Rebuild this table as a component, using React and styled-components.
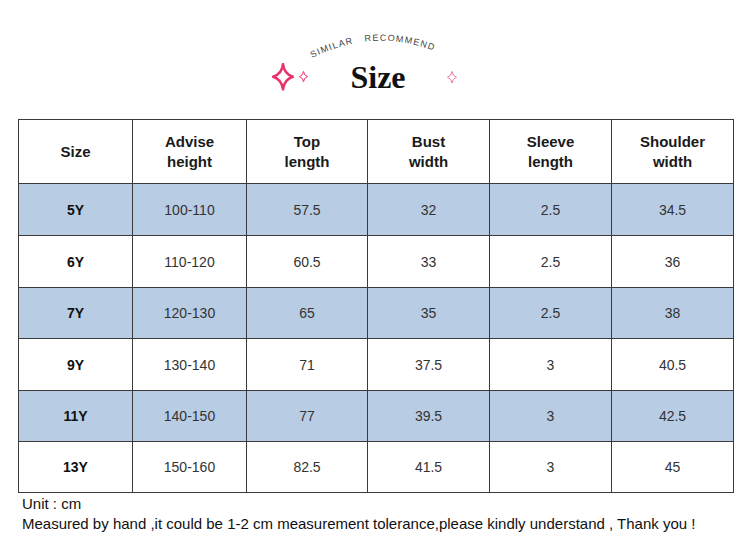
import React from 'react';
import styled, { createGlobalStyle } from 'styled-components';

const GlobalStyle = createGlobalStyle`
  body {
    margin: 0;
    background: #fff;
    font-family: "Liberation Sans", Arial, sans-serif;
  }
`;

const Page = styled.div`
  width: 750px;
  height: 540px;
  overflow: hidden;
`;

const Header = styled.header`
  height: 119px;
  display: flex;
  flex-direction: column;
  align-items: center;
  padding-top: 31px;
  box-sizing: border-box;
`;

const ArcText = styled.svg`
  display: block;
  margin-left: 6px;
`;

const TitleRow = styled.div`
  display: flex;
  align-items: center;
  margin-left: 6px;
`;

const Side = styled.div`
  width: 78px;
  display: flex;
  align-items: center;
  padding-left: ${(p) => p.$pad || 0}px;
  box-sizing: border-box;
  gap: 5px;
`;

const Title = styled.h1`
  margin: 0;
  font-family: "Liberation Serif", "DejaVu Serif", serif;
  font-weight: bold;
  font-size: 32px;
  line-height: 36px;
  color: #111;
`;

const Table = styled.table`
  margin-left: 18px;
  border-collapse: collapse;
  table-layout: fixed;
  width: 716px;
  color: #222;
`;

const HeadCell = styled.th`
  height: 63px;
  border: 1px solid #3a3a3a;
  font-size: 15px;
  font-weight: bold;
  line-height: 20px;
  text-align: center;
  color: #1a1a1a;
  padding: 0;
`;

const Row = styled.tr`
  background: ${(p) => (p.$shade ? '#b8cce4' : '#fff')};
`;

const Cell = styled.td`
  height: ${(p) => p.$h}px;
  border: 1px solid #3a3a3a;
  font-size: 14px;
  font-weight: ${(p) => (p.$bold ? 'bold' : 'normal')};
  color: ${(p) => (p.$bold ? '#111' : '#333')};
  text-align: center;
  padding: 0;
`;

const Notes = styled.div`
  padding: 1px 0 0 22px;
  font-size: 15px;
  line-height: 20px;
  color: #111;
  letter-spacing: 0;
`;

const Sparkle = ({ size, color = '#e8336b', stroke = 2 }) => (
  <svg width={size} height={size * 1.25} viewBox="0 0 20 25">
    <path
      d="M10 1 Q11 10 19 12.5 Q11 15 10 24 Q9 15 1 12.5 Q9 10 10 1 Z"
      fill="none"
      stroke={color}
      strokeWidth={stroke}
      strokeLinejoin="round"
    />
  </svg>
);

const columns = [
  { label: ['Size'], width: 114 },
  { label: ['Advise', 'height'], width: 114 },
  { label: ['Top', 'length'], width: 121 },
  { label: ['Bust', 'width'], width: 122 },
  { label: ['Sleeve', 'length'], width: 122 },
  { label: ['Shoulder', 'width'], width: 122 },
];

const rows = [
  ['5Y', '100-110', '57.5', '32', '2.5', '34.5'],
  ['6Y', '110-120', '60.5', '33', '2.5', '36'],
  ['7Y', '120-130', '65', '35', '2.5', '38'],
  ['9Y', '130-140', '71', '37.5', '3', '40.5'],
  ['11Y', '140-150', '77', '39.5', '3', '42.5'],
  ['13Y', '150-160', '82.5', '41.5', '3', '45'],
];

const rowHeights = [51, 51, 50, 51, 50, 50];

export default function App() {
  return (
    <Page>
      <GlobalStyle />
      <Header>
        <ArcText width="140" height="28" viewBox="0 0 140 28">
          <defs>
            <path id="arc" d="M4 27 Q70 -6 136 24" />
          </defs>
          <text fontFamily="Liberation Sans, Arial, sans-serif" fontSize="9" fill="#444" letterSpacing="1.2">
            <textPath href="#arc">SIMILAR&#160;&#160;&#160;RECOMMEND</textPath>
          </text>
        </ArcText>
        <TitleRow>
          <Side>
            <Sparkle size={22} stroke={2.3} />
            <Sparkle size={9} stroke={2.2} />
          </Side>
          <Title>Size</Title>
          <Side $pad={41}>
            <Sparkle size={10} color="#ee6b95" stroke={1.8} />
          </Side>
        </TitleRow>
      </Header>

      <Table>
        <colgroup>
          {columns.map((c, i) => (
            <col key={i} style={{ width: c.width }} />
          ))}
        </colgroup>
        <thead>
          <tr>
            {columns.map((c, i) => (
              <HeadCell key={i}>
                {c.label.map((l, j) => (
                  <div key={j}>{l}</div>
                ))}
              </HeadCell>
            ))}
          </tr>
        </thead>
        <tbody>
          {rows.map((r, i) => (
            <Row key={i} $shade={i % 2 === 0}>
              {r.map((v, j) => (
                <Cell key={j} $h={rowHeights[i]} $bold={j === 0}>
                  {v}
                </Cell>
              ))}
            </Row>
          ))}
        </tbody>
      </Table>

      <Notes>
        <div>Unit : cm</div>
        <div>
          Measured by hand ,it could be 1-2 cm measurement tolerance,please kindly understand , Thank you !
        </div>
      </Notes>
    </Page>
  );
}
